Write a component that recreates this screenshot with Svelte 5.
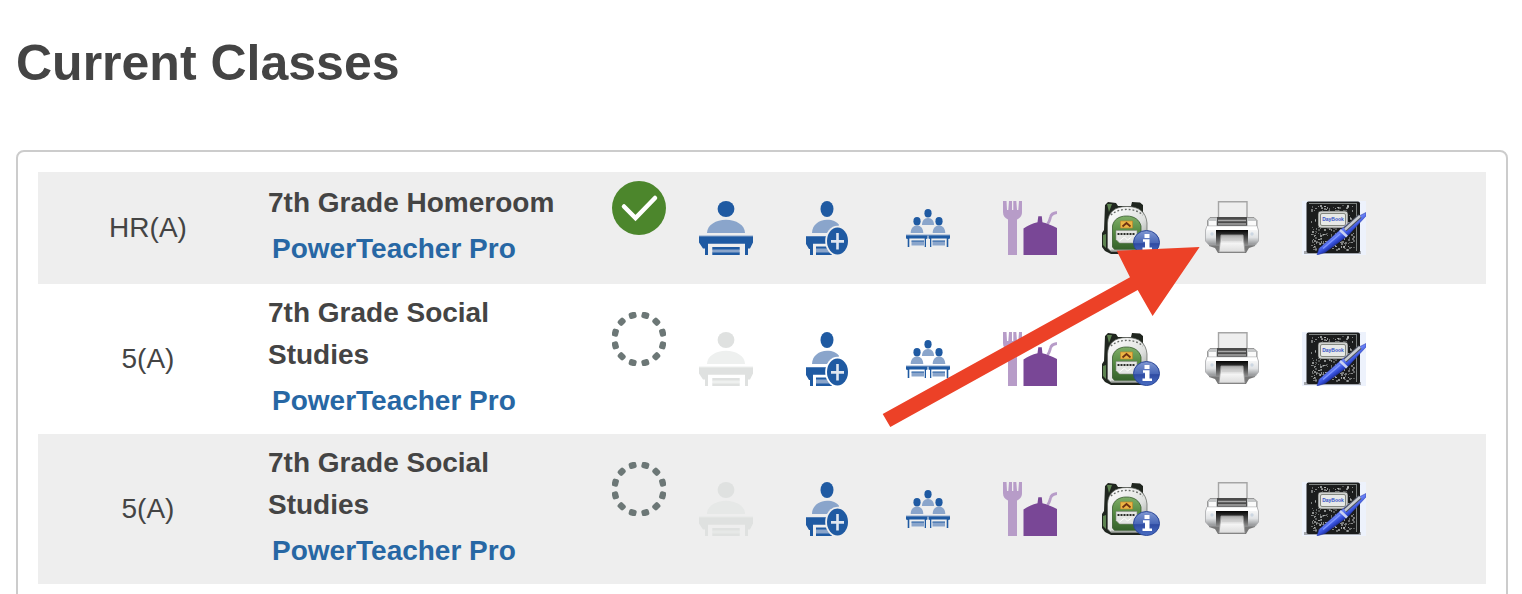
<script>
  const classes = [
    { period: 'HR(A)', name: '7th Grade Homeroom', taken: true, seating: true },
    { period: '5(A)', name: '7th Grade Social Studies', taken: false, seating: false },
    { period: '5(A)', name: '7th Grade Social Studies', taken: false, seating: false }
  ];

  const actions = [
    { id: 'attendance', label: 'Attendance' },
    { id: 'add', label: 'Add student' },
    { id: 'group', label: 'Seating chart' },
    { id: 'lunch', label: 'Lunch count' },
    { id: 'backpack', label: 'Student information' },
    { id: 'print', label: 'Print reports' },
    { id: 'notebook', label: 'Daybook' }
  ];

  // Cover texture of the composition notebook
  const specks = [];
  let seed = 4711;
  const next = () => (seed = (seed * 48271) % 2147483647) / 2147483647;
  for (let i = 0; i < 230; i++) {
    specks.push({
      x: 9 + Math.floor(next() * 43),
      y: 4 + Math.floor(next() * 45),
      w: 1 + Math.floor(next() * 2),
      h: 1 + Math.floor(next() * 2),
      o: 0.3 + next() * 0.45
    });
  }
</script>

{#snippet attendance()}
  <svg width="54" height="54" viewBox="0 0 54 54" aria-hidden="true">
    <ellipse class="strong" cx="27" cy="8" rx="8.4" ry="8" />
    <path class="soft" d="M8 32C8 24 17 18.7 27 18.7S46 24 46 32Z" />
    <path class="soft" d="M0 34.4h54v1.5H0z" />
    <path class="strong" d="M0 35.4h54v6l-3 6h-2V54h-3V42.8H9V54H6v-6.6H4l-4-6Z" />
    <path class="soft" d="M13.3 48h27.4v4H13.3z" />
    <path class="strong" d="M13.3 46h27.4v2.4H13.3zM13.3 51.6h27.4V54H13.3z" />
  </svg>
{/snippet}

{#snippet add()}
  <svg width="42" height="54" viewBox="0 0 42 54" aria-hidden="true">
    <ellipse class="strong" cx="21" cy="8" rx="6.5" ry="8" />
    <path class="soft" d="M6 32C6 24 13 18.7 21 18.7c6 0 9 1.500 12 5L30 32Z" />
    <path class="strong" d="M0 35.2h25v7.6H7V54H4v-6H3l-3-5Z" />
    <path class="soft" d="M10 48h16v4H10z" />
    <path class="strong" d="M10 45.4h16v2.4H10zM10 51.6h16V54H10z" />
    <ellipse class="halo" cx="31.5" cy="40" rx="12.3" ry="15.2" />
    <ellipse class="strong" cx="31.5" cy="40" rx="10.5" ry="13.5" />
    <path d="M31.5 32v16.6M25 40.4h13" stroke="#dfe6f0" stroke-width="2.6" />
  </svg>
{/snippet}

{#snippet group()}
  <svg width="44" height="38" viewBox="0 0 44 38" aria-hidden="true">
    <ellipse class="strong" cx="22" cy="4.2" rx="3.6" ry="4.2" />
    <ellipse class="strong" cx="11" cy="12.2" rx="3.6" ry="4.2" />
    <ellipse class="strong" cx="33" cy="12.2" rx="3.6" ry="4.2" />
    <path class="soft" d="M16 16c0-4 2-7 6-7s6 3 6 7ZM4.7 24c0-4.500 2.500-7.500 6.300-7.500s6.300 3 6.300 7.500ZM26.700 24c0-4.500 2.500-7.500 6.300-7.500s6.300 3 6.300 7.500Z" />
    <path class="soft" d="M0 25.4h44v1.600H0z" />
    <path class="strong" d="M0 26.5h21.500v3L20 30v8h-1.300v-8.500H3.300V38H1.700v-8L0 29.500ZM22.500 26.500H44v3l-1.700.5v8h-1.600v-8.500H25.300V38H24v-8l-1.500-.5Z" />
    <path class="soft" d="M5.500 32h12.500v4.500H5.500zM26.500 32H39v4.500H26.500z" />
    <path class="strong" d="M5.500 31.400h12.500v1.200H5.500zM26.500 31.400H39v1.200H26.500z" />
  </svg>
{/snippet}

{#snippet lunch()}
  <svg width="54" height="54" viewBox="0 0 54 54" aria-hidden="true">
    <path fill="#b79cc8" d="M0 0h3.500l.5 9h1.300L6 0h3v9h1.300V0h3l.7 9h1.300L16 0h3v11c0 4-2 6-5 7.500V54H5V18.500C2 17 0 15 0 11Z" />
    <path d="M44.500 23c2-2 2.200-4 3-7 .6-2.600 2.500-4 6.500-4.500" fill="none" stroke="#b79cc8" stroke-width="2.800" />
    <path fill="#794796" d="M20.500 54V27.500c4-3 9-5 14-6.300l.8-6h3.500l.6 6c5 1.300 10 3.300 14.600 5.800v27Z" />
  </svg>
{/snippet}

{#snippet backpack()}
  <svg width="58" height="54" viewBox="0 0 58 54" aria-hidden="true">
    <defs>
      <linearGradient id="packShell" x1="0" y1="0" x2="1" y2="1">
        <stop offset="0" stop-color="#fff" /><stop offset=".6" stop-color="#dfe1df" /><stop offset="1" stop-color="#8b908b" />
      </linearGradient>
      <linearGradient id="packFront" x1="0" y1="0" x2="0" y2="1">
        <stop offset="0" stop-color="#7fae68" /><stop offset=".5" stop-color="#52873f" /><stop offset="1" stop-color="#34602a" />
      </linearGradient>
      <linearGradient id="infoBlue" x1="0" y1="0" x2="0" y2="1">
        <stop offset="0" stop-color="#8098d2" /><stop offset=".5" stop-color="#4a68b8" /><stop offset=".55" stop-color="#2f4ba2" /><stop offset="1" stop-color="#4a6ec4" />
      </linearGradient>
    </defs>
    <path fill="#20261f" d="M3 4l3-3 8 1 2 3h13l1-4 8 .5 3 2.500v7l3 8v30l-4 4H9l-6-3-3-4V32l2-3Z" />
    <path fill="#5e8451" d="M5 3h5l-3 8zM1 34l3-1v14l-3-3Z" />
    <path fill="url(#packShell)" stroke="#5b605a" stroke-width=".7" d="M5.500 47V22C6 11 13 5.500 25 5.500S44 11 45 22v25l-4 3.500H9Z" />
    <path d="M9 14c7-7 23-8 32 0" fill="none" stroke="#676b67" stroke-width="1.400" stroke-dasharray="1.800 2" />
    <path fill="url(#packFront)" stroke="#375a2e" stroke-width=".8" d="M10.500 32V25c1-6 6-10 14-10s13 4 14.500 10v15L34 49H13l-2.500-3Z" />
    <path fill="#ecb544" stroke="#c2862c" stroke-width=".7" d="M18.500 20h12v7h-12z" />
    <path d="m20.500 25.500 4-3.500 4 3.500" fill="none" stroke="#6e3212" stroke-width="1.800" />
    <path fill="#e4e6e3" stroke="#8a8f87" stroke-width=".6" d="M14 29.500h21v9L32 42H17.500L14 38.500Z" />
    <path d="M15.500 33h18" stroke="#2a2e29" stroke-width="2" stroke-dasharray="2 1" />
    <path d="m17.500 40 5-4 3 3 4-3" stroke="#fff" fill="none" />
    <path d="M9 49.500h28" stroke="#a5aaa4" stroke-width="1.800" />
    <ellipse cx="44.500" cy="41.500" rx="13" ry="12" fill="url(#infoBlue)" stroke="#2b4798" />
    <path fill="#fff" d="M42.500 33h5v4h-5zM41 38.300h6.500v8.200h2.500V49h-9.500v-2.500h2.500v-5.700H41Z" />
  </svg>
{/snippet}

{#snippet print()}
  <svg width="54" height="54" viewBox="0 0 54 54" aria-hidden="true">
    <defs>
      <linearGradient id="printerBody" x1="0" y1="0" x2="0" y2="1">
        <stop offset="0" stop-color="#fff" /><stop offset=".6" stop-color="#e1e3e5" /><stop offset="1" stop-color="#8e9092" />
      </linearGradient>
      <linearGradient id="printerSlot" x1="0" y1="0" x2="0" y2="1">
        <stop offset="0" stop-color="#050505" /><stop offset="1" stop-color="#8b8b8b" />
      </linearGradient>
      <linearGradient id="printerSheet" x1="0" y1="0" x2="0" y2="1">
        <stop offset="0" stop-color="#aaa" /><stop offset=".5" stop-color="#f4f4f4" /><stop offset="1" stop-color="#dcdcdc" />
      </linearGradient>
    </defs>
    <path fill="#eee" stroke="#a5a5a5" stroke-width="1.400" d="M13.500.7h28.500V20H13.500z" />
    <path fill="#777" d="M4 38h46v7l-6 2-3 5H13l-3-5-6-2Z" />
    <path fill="#c5c7c8" stroke="#868686" stroke-width=".8" d="M5 16.500h44l3 3V29H2.500v-9.500Z" />
    <path fill="#fafafa" d="M4 20h7v5H4zM43 20h8v5h-8z" />
    <path fill="#4b4b4b" d="M12 16h30v9H12z" />
    <path d="M13 19.500h28M13 23h28" stroke="#a8a8a8" stroke-width="1.300" />
    <path fill="url(#printerBody)" stroke="#a8aaac" stroke-width=".8" d="M2 25h50l1.500 4v11l-3 4H4l-3.500-4V29Z" />
    <path fill="#fff" d="M2 25.500h50V29H2z" />
    <path fill="url(#printerSlot)" d="M11 29h32v15H11z" />
    <path fill="url(#printerSheet)" stroke="#999" stroke-width=".8" d="M16 34h22l2 17H14Z" />
    <path d="M17 39h20" stroke="#c8c8c8" />
    <circle cx="7" cy="33" r="1.700" fill="#cbd6e2" /><circle cx="47" cy="33" r="1.700" fill="#cbd6e2" />
  </svg>
{/snippet}

{#snippet notebook()}
  <svg width="64" height="54" viewBox="0 0 64 54" aria-hidden="true">
    <defs>
      <linearGradient id="penBarrel" gradientUnits="userSpaceOnUse" x1="28" y1="38" x2="33" y2="45">
        <stop offset="0" stop-color="#6a82f4" /><stop offset=".5" stop-color="#3a55e0" /><stop offset="1" stop-color="#1b2c9c" />
      </linearGradient>
    </defs>
    <path fill="#edf2fc" d="M0 0h64v54H0z" />
    <path fill="#a5a8ae" d="M2 50h57v3H2z" />
    <rect x="4.500" y=".5" width="53.500" height="51.500" rx="2" fill="#1b1c1c" />
    <path d="M7 2.500h48M54.500 3v47" stroke="#7d8280" stroke-width="1" fill="none" />
    {#each specks as s}
      <rect x={s.x} y={s.y} width={s.w} height={s.h} fill="#cfd2d1" opacity={s.o} />
    {/each}
    <rect x="16" y="10" width="30" height="17" rx="3" fill="#cfd1ce" stroke="#2a2b2a" stroke-width=".6" />
    <rect x="18.500" y="12.500" width="25" height="12" rx="1.500" fill="#e7e9e7" stroke="#83877f" />
    <text x="31" y="20" text-anchor="middle">DayBook</text>
    <path fill="url(#penBarrel)" stroke="#2437a8" stroke-width=".5" d="M15 54l2-6.500L38 29l17-13 9-4.500v3.500L46 34.500 23 51.500Z" />
    <path d="m38 29 7 6.500" stroke="#c9d1f2" stroke-width="2.600" />
    <path d="M43 28.500l15-13.500" stroke="#4d525e" stroke-width="4.600" />
    <path d="M43 28.500l15-13.500" stroke="#c8ccd3" stroke-width="2.400" />
    <path d="m21 47.500 17-14.500" stroke="#7d94ff" stroke-width="1.600" />
  </svg>
{/snippet}

{#snippet glyph(id)}
  {#if id === 'attendance'}{@render attendance()}
  {:else if id === 'add'}{@render add()}
  {:else if id === 'group'}{@render group()}
  {:else if id === 'lunch'}{@render lunch()}
  {:else if id === 'backpack'}{@render backpack()}
  {:else if id === 'print'}{@render print()}
  {:else}{@render notebook()}{/if}
{/snippet}

<main>
  <h1>Current Classes</h1>
  <section class="panel">
    <table>
      <colgroup>
        <col class="c-period" /><col class="c-name" /><col class="c-status" />
        {#each actions as a}<col class="c-action" />{/each}
        <col />
      </colgroup>
      <tbody>
        {#each classes as c}
          <tr>
            <td class="period">{c.period}</td>
            <td class="name">
              <div>{c.name}</div>
              <a href="#pro">PowerTeacher Pro</a>
            </td>
            <td class="status">
              {#if c.taken}
                <svg width="54" height="54" viewBox="0 0 54 54" role="img" aria-label="Attendance taken">
                  <circle cx="27" cy="27" r="27" fill="#4c862c" />
                  <path d="M12 25.500l11.500 11.500L43 17" fill="none" stroke="#fff" stroke-width="4.500" stroke-linecap="round" />
                </svg>
              {:else}
                <svg width="54" height="54" viewBox="0 0 54 54" role="img" aria-label="Attendance not taken">
                  {#each Array(12) as _, i}
                    <rect x="23.200" y="-.7" width="7.600" height="6.400" rx="2" fill="#6c7776" transform="rotate({15 + i * 30} 27 27)" />
                  {/each}
                </svg>
              {/if}
            </td>
            {#each actions as a}
              <td class="action">
                <button type="button" aria-label={a.label} disabled={a.id === 'attendance' && !c.seating}>
                  {@render glyph(a.id)}
                </button>
              </td>
            {/each}
            <td></td>
          </tr>
        {/each}
      </tbody>
    </table>
    <svg class="arrow" width="318" height="182" viewBox="882 246 318 182" aria-hidden="true">
      <path fill="#ec4127" d="M882.700 414 1130 277.300 1116.700 250.700 1199.600 247 1152.600 316 1137.700 290 890.300 427Z" />
    </svg>
  </section>
</main>

<style>
  :global(body) {
    background: #fff;
    overflow: hidden;
  }
  main {
    padding: 33px 14px 0 16px;
    font-family: "Liberation Sans", Arial, sans-serif;
    font-size: 28px;
    line-height: 42px;
    color: #444;
  }
  h1 {
    margin: 0 0 57px;
    font-size: 50px;
    line-height: 60px;
  }
  .panel {
    position: relative;
    padding: 20px;
    border: 2px solid #ccc;
    border-radius: 8px;
  }
  table {
    width: 100%;
    table-layout: fixed;
    border-collapse: collapse;
  }
  .c-period { width: 220px; }
  .c-name { width: 346px; }
  .c-status { width: 71px; }
  .c-action { width: 7%; }
  tr { --row: #fff; background: var(--row); }
  tr:nth-child(odd) { --row: #eee; }
  td {
    padding: 0;
    vertical-align: middle;
  }
  .period, .action { text-align: center; }
  .name {
    padding: 8px 24px 12px 10px;
    font-weight: bold;
  }
  .name a {
    display: block;
    margin: 4px 0 0 4px;
    color: #2767a4;
    text-decoration: none;
  }
  .status { padding: 9px 8px 49px; }
  svg { display: block; }
  button {
    display: inline-flex;
    align-items: center;
    justify-content: center;
    width: 64px;
    height: 54px;
    padding: 0;
    border: 0;
    background: none;
    vertical-align: middle;
    cursor: pointer;
  }
  button svg { flex: none; }
  .strong { fill: #1f5aa2; }
  .soft { fill: #8aa5cb; }
  .halo { fill: var(--row); }
  button:disabled { cursor: default; }
  button:disabled .strong { fill: #dfe1e0; }
  button:disabled .soft { fill: #eef0ef; }
  tr:nth-child(odd) button:disabled .soft { fill: #e6e8e7; }
  text {
    font-size: 5px;
    font-weight: bold;
    fill: #3553c8;
  }
  .arrow {
    position: absolute;
    left: 864px;
    top: 94px;
    pointer-events: none;
  }
</style>
